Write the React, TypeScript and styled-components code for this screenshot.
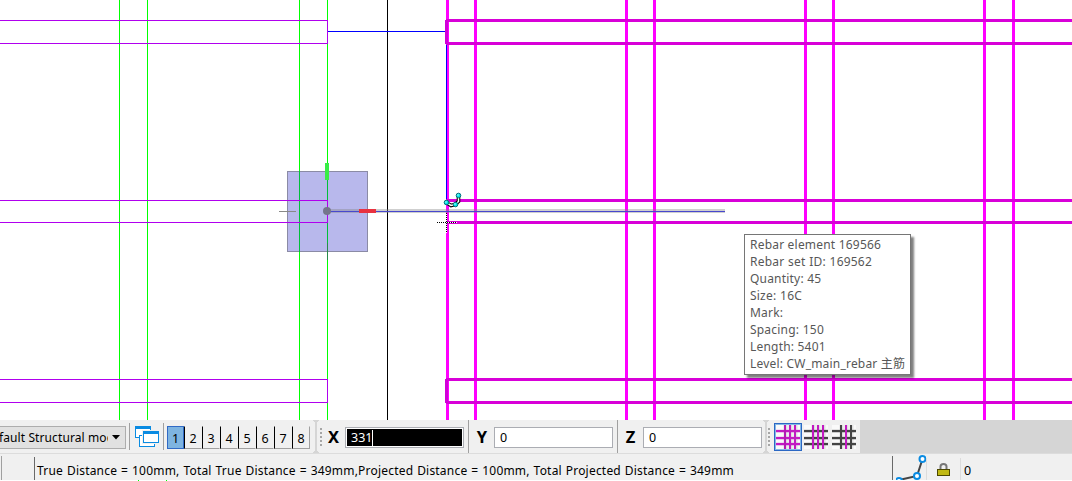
import React from 'react';
import styled, { createGlobalStyle } from 'styled-components';

const Global = createGlobalStyle`
  * { box-sizing: border-box; }
  body { margin: 0; background: #fff; overflow: hidden; font-family: "Noto Sans", "Noto Sans CJK SC", sans-serif; font-size: 12px; color: #000; }
  svg { display: block; flex: none; }
`;
const Window = styled.div`width: 1072px; height: 481px; display: flex; flex-direction: column; position: relative; overflow: hidden;`;
const View = styled.div`height: 420px; flex: none;`;
const Tip = styled.div`
  position: absolute; left: 744px; top: 234px; width: 167px; height: 141px;
  border: 1px solid #767676; background: #fff; color: #575757;
  box-shadow: 3px 3px 2px rgba(0,0,0,.5); padding: 1px 0 0 5px;
`;
const TipLine = styled.div<{ $w: number }>`height: 17px; line-height: 18px; width: ${p => p.$w}px; white-space: nowrap; text-align-last: justify; letter-spacing: .2px;`;
const Toolbars = styled.div`height: 34px; flex: none; display: flex; background: #d5d5d5; border-bottom: 1px solid #dcdcdc;`;
const Band = styled.div<{ $w: number }>`width: ${p => p.$w}px; height: 33px; flex: none; display: flex; background: #f0f0f0; position: relative;`;
const Combo = styled.div`
  width: 126px; height: 23px; margin-top: 6px; flex: none; border: 1px solid #adadad; border-left: 0;
  background: #e1e1e1; display: flex; align-items: center; justify-content: space-between; padding-right: 5px;
`;
const ComboText = styled.div`width: 108px; overflow: hidden; white-space: nowrap; line-height: 21px; letter-spacing: .1px; text-indent: -1px;`;
const Rule = styled.div<{ $m: string; $h: number; $c?: string }>`width: 1px; flex: none; height: ${p => p.$h}px; margin: ${p => p.$m}; background: ${p => p.$c || '#a0a0a0'};`;
const Views = styled.div`display: flex; margin: 6px 0 0 3px;`;
const ViewButton = styled.div<{ $on?: boolean }>`
  width: ${p => (p.$on ? 17 : 18)}px; height: 23px; line-height: 23px; text-align: center; font-size: 12.5px;
  border: 1px solid ${p => (p.$on ? '#316ac5' : '#a0a0a0')}; border-top-color: ${p => (p.$on ? '#316ac5' : '#f0f0f0')};
  ${p => p.$on ? 'background: #7eb4e1;' : 'border-left-color: #000; border-right-color: transparent;'}
  &:last-child { border-right-color: #a0a0a0; }
`;
const Axis = styled.div<{ $w: number }>`width: ${p => p.$w}px; flex: none; text-align: center; font: bold 16.5px/34px "Noto Sans", sans-serif;`;
const Field = styled.div<{ $on?: boolean }>`
  width: 119px; height: 21px; flex: none; margin-top: 7px; border: 1px solid #abadb3; padding: 1px;
  background: ${p => (p.$on ? '#000' : '#fff')}; color: ${p => (p.$on ? '#fff' : '#000')};
  ${p => p.$on ? 'box-shadow: inset 0 0 0 1px #fff;' : ''}
  padding-left: 5px; line-height: 18px; display: flex; font-size: 12.5px;
`;
const Caret = styled.span`width: 1px; height: 16px; margin-top: 1px; background: #fff;`;
const Status = styled.div`height: 26px; flex: none; display: flex; background: #f0f0f0;`;
const Message = styled.div`width: 697px; margin-left: 2px; white-space: nowrap; line-height: 34px; text-align-last: justify; letter-spacing: .2px; flex: none;`;
const Count = styled.span`line-height: 34px; font-size: 12.5px;`;
const Bottom = styled.div`height: 1px;`;

const Grip = ({ w }: { w: number }) => (
  <svg width={w} height="33" shapeRendering="crispEdges">
    <path d="M0 0h6v1H5v1H4v29h1v1h1v1H0v-1h1v-1h1V2H1V1H0z" fill="#d5d5d5" />
    {[8, 12, 16, 20, 24].map(y => <rect key={y} x={w - 2} y={y} width="2" height="2" fill="#a6a6a6" />)}
  </svg>
);

const RebarIcon = ({ on, h, c }: { on?: boolean; h: string; c: string[] }) => (
  <svg width="28" height="28">
    {on && <><rect width="28" height="28" fill="#2b68c4" /><rect x="1" y="1" width="26" height="26" fill="#86b8e6" /></>}
    <rect x="2" y="2" width="24" height="24" fill="#fafafa" />
    {[10, 15, 20].map(x => <rect key={x} x={x - .5} y="2" width="4" height="24" fill="#000" opacity=".1" />)}
    {[7, 14, 20].map(y => <g key={y}><rect x="2" y={y - .5} width="24" height="3.500" fill={h} opacity=".25" /><rect x="2" y={y} width="24" height="2" fill={h} /></g>)}
    {[10, 15, 20].map((x, i) => <rect key={x} x={x} y="2" width="2" height="24" fill={c[i]} />)}
  </svg>
);
const Icons = styled.div`display: flex; margin: 3px 0 0 4px;`;

const Drawing = () => (
  <svg width="1072" height="420" shapeRendering="crispEdges">
    {[119, 147, 299, 327].map(x => <rect key={x} x={x} width="1" height="420" fill="#00ff00" />)}
    <rect x="387" width="1" height="420" fill="#000" />
    <rect x="328" y="31" width="118" height="1" fill="#0000ff" />
    {[446, 474, 625, 653, 804, 832, 983, 1012].map(x => <rect key={x} x={x} width="3" height="420" fill="#ff00ff" />)}
    <rect x="446" y="45" width="1" height="155" fill="#0000ff" />
    {[19, 42, 199, 221, 378, 401].map(y => <rect key={y} x="446" y={y} width="626" height="3" fill="#d800d8" />)}
    {[20, 379].map(y => <rect key={y} x="445" y={y} width="3" height="24" fill="#d000d8" />)}
    <path d="M287 171h81v81h-81z" fill="#b8b8ec" />
    <path d="M287.500 171.500h80v80h-80z" fill="none" stroke="#8b8ba5" />
    <path d="M299.500 171v81M327.500 171v81" stroke="#00bf38" />
    <path d="M327.500 243v17" stroke="#278b49" />
    {[20, 200, 379].map(y => <path key={y} d={`M0 ${y + .5}H327.500V${y + (y === 200 ? 22.5 : 23.5)}H0`} fill="none" stroke="#b000ee" />)}
    <path d="M279 211.500h17" stroke="#888" />
    <rect x="327" y="209" width="398" height="4" fill="#808080" opacity=".38" />
    <rect x="327" y="211" width="398" height="1" fill="#4848ce" />
    <rect x="325" y="163" width="4" height="17" fill="#38ed46" />
    <rect x="359" y="209" width="17" height="4" fill="#e83240" />
    <circle cx="327" cy="211" r="4" fill="#74748b" shapeRendering="auto" />
    <path d="M437 222.500h20M446.500 213v20" stroke="#fff" />
    <path d="M437 222.500h20M446.500 213v20" stroke="#000" strokeDasharray="1 1" />
    <g shapeRendering="auto">
      <path d="M447 203l4 2.500 4-1 3.500-3V196" fill="none" stroke="#000" strokeWidth="3.600" />
      <path d="M447 203l4 2.500 4-1 3.500-3V196" fill="none" stroke="#fff" strokeWidth="1.500" />
      {[[446.500, 202.500], [455.500, 204.500], [458.500, 195.500]].map(([x, y]) => <g key={x}><circle cx={x} cy={y} r="2.300" fill="#00e5e5" stroke="#086f7a" /><circle cx={x - .5} cy={y - .5} r=".7" fill="#dff" /></g>)}
    </g>
  </svg>
);

const tips: [string, number][] = [['Rebar element 169566', 131], ['Rebar set ID: 169562', 122], ['Quantity: 45', 69], ['Size: 16C', 52], ['Mark:', 34], ['Spacing: 150', 74], ['Length: 5401', 74], ['Level: CW_main_rebar 主筋', 154]];

export default function App() {
  return (
    <Window>
      <Global />
      <View><Drawing /></View>
      <Tip>{tips.map(([t, w]) => <TipLine key={t} $w={w}>{t}</TipLine>)}</Tip>
      <Toolbars>
        <Band $w={313}>
          <Combo><ComboText>fault Structural model</ComboText><svg width="8" height="5"><path d="M0 0h8L4 4.500z" /></svg></Combo>
          <Rule $m="3px 5px 0 3px" $h={27} />
          <svg width="25" height="33" shapeRendering="crispEdges">
            <g fill="#fff" stroke="#0a8be2"><rect x=".5" y="6.500" width="15" height="11" /><rect x="4.500" y="15.500" width="15" height="11" /><rect x="7" y="10" width="18" height="14" stroke="none" fill="#f0f0f0" /><rect x="8.500" y="11.500" width="15" height="11" /></g>
            <path d="M0 6h16v3H0zM8 11h16v3H8z" fill="#0a8be2" />
          </svg>
          <Rule $m="3px 0 0 3px" $h={27} />
          <Views>{[1, 2, 3, 4, 5, 6, 7, 8].map(n => <ViewButton key={n} $on={n === 1}>{n}</ViewButton>)}</Views>
        </Band>
        <Band $w={450}>
          <Grip w={9} />
          <Axis $w={23}>X</Axis>
          <Field $on>331<Caret /></Field>
          <Rule $m="0 1px 0 4px" $h={33} />
          <Axis $w={24}>Y</Axis>
          <Field>0</Field>
          <Rule $m="0 0 0 4px" $h={33} />
          <Axis $w={25}>Z</Axis>
          <Field>0</Field>
        </Band>
        <Band $w={97}>
          <Grip w={7} />
          <Icons>
            <RebarIcon on h="#c21ac2" c={['#b51ab5', '#c21ac2', '#c21ac2']} />
            <RebarIcon h="#444" c={['#c21ac2', '#c21ac2', '#c21ac2']} />
            <RebarIcon h="#444" c={['#444', '#c21ac2', '#444']} />
          </Icons>
        </Band>
      </Toolbars>
      <Status>
        <Rule $m="2px 0 0 1px" $h={24} />
        <Rule $m="3px 0 0 32px" $h={23} $c="#696969" />
        <Message>True Distance = 100mm, Total True Distance = 349mm,Projected Distance = 100mm, Total Projected Distance = 349mm</Message>
        <Rule $m="2px 3px 0 158px" $h={24} $c="#696969" />
        <svg width="30" height="26"><path d="M3 26L21 22 26.500 5" fill="none" stroke="#444" strokeWidth="2" /><g fill="#fff" stroke="#0a8be2" strokeWidth="2"><circle cx="26.500" cy="5" r="3" /><circle cx="21" cy="22" r="3" /><circle cx="3" cy="27" r="3" /></g></svg>
        <Rule $m="4px 10px 0 0" $h={22} $c="#dcdcdc" />
        <svg width="14" height="26"><path d="M3.500 16v-3.500a3 2.500 0 0 1 6 0V16" fill="none" stroke="#777" strokeWidth="2" /><rect x=".5" y="15.500" width="12" height="6" fill="#c0b812" stroke="#4c4800" /></svg>
        <Rule $m="4px 3px 0 9px" $h={22} $c="#dcdcdc" />
        <Count>0</Count>
      </Status>
      <Bottom><svg width="1072" height="1"><path d="M138 .5h1M166 .5h1" stroke="#00ff00" /></svg></Bottom>
    </Window>
  );
}
